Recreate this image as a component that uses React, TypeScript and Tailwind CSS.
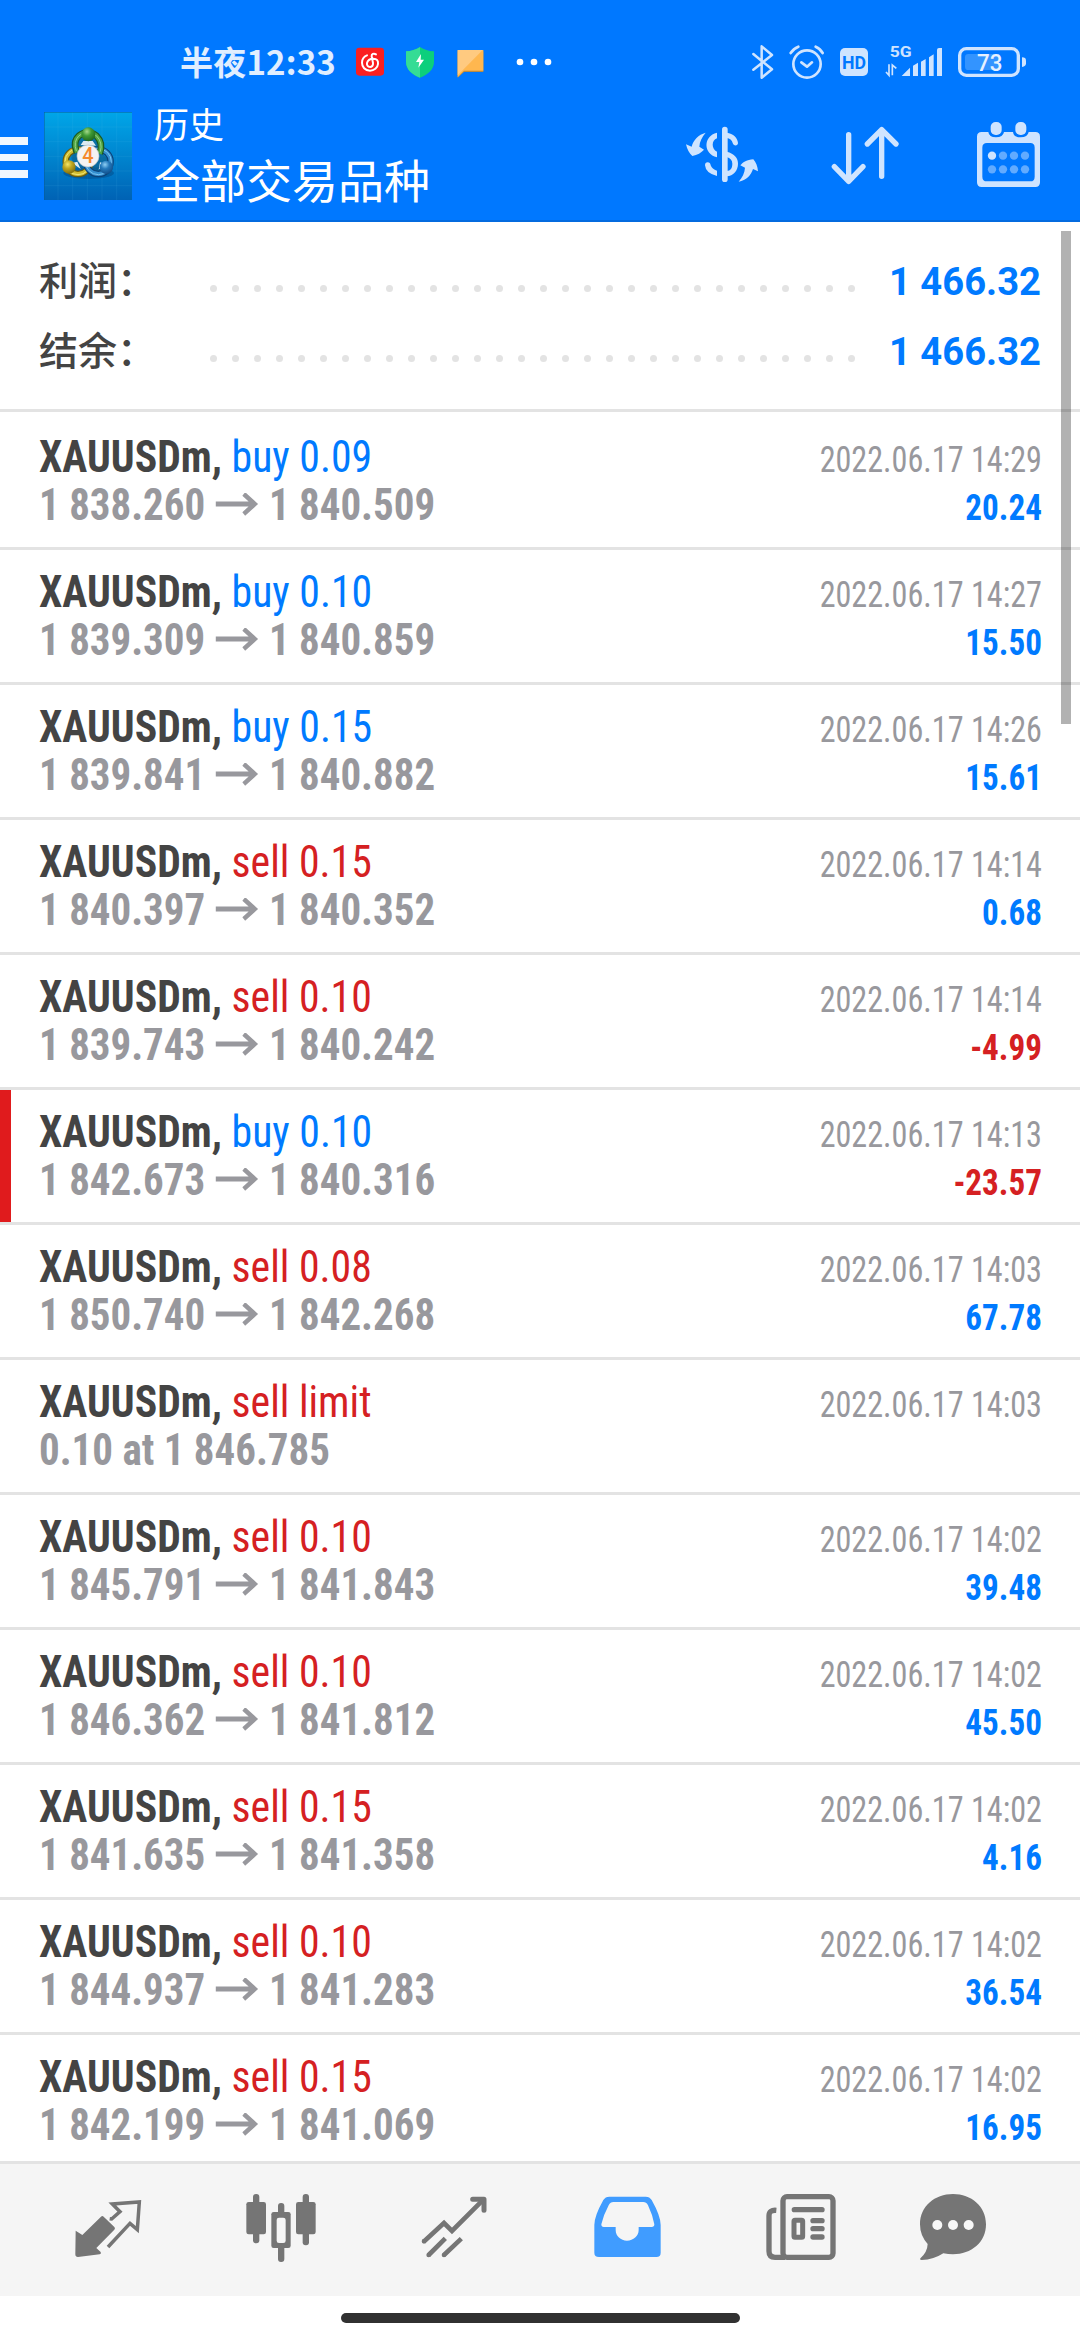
import React from "react";

type Deal = {
  side: "buy" | "sell";
  what: string;
  from: string;
  to?: string;
  time: string;
  profit?: string;
  marked?: boolean;
};

const deals: Deal[] = [
  { side: "buy", what: "buy 0.09", from: "1 838.260", to: "1 840.509", time: "14:29", profit: "20.24" },
  { side: "buy", what: "buy 0.10", from: "1 839.309", to: "1 840.859", time: "14:27", profit: "15.50" },
  { side: "buy", what: "buy 0.15", from: "1 839.841", to: "1 840.882", time: "14:26", profit: "15.61" },
  { side: "sell", what: "sell 0.15", from: "1 840.397", to: "1 840.352", time: "14:14", profit: "0.68" },
  { side: "sell", what: "sell 0.10", from: "1 839.743", to: "1 840.242", time: "14:14", profit: "-4.99" },
  { side: "buy", what: "buy 0.10", from: "1 842.673", to: "1 840.316", time: "14:13", profit: "-23.57", marked: true },
  { side: "sell", what: "sell 0.08", from: "1 850.740", to: "1 842.268", time: "14:03", profit: "67.78" },
  { side: "sell", what: "sell limit", from: "0.10 at 1 846.785", time: "14:03" },
  { side: "sell", what: "sell 0.10", from: "1 845.791", to: "1 841.843", time: "14:02", profit: "39.48" },
  { side: "sell", what: "sell 0.10", from: "1 846.362", to: "1 841.812", time: "14:02", profit: "45.50" },
  { side: "sell", what: "sell 0.15", from: "1 841.635", to: "1 841.358", time: "14:02", profit: "4.16" },
  { side: "sell", what: "sell 0.10", from: "1 844.937", to: "1 841.283", time: "14:02", profit: "36.54" },
  { side: "sell", what: "sell 0.15", from: "1 842.199", to: "1 841.069", time: "14:02", profit: "16.95" },
];

const PALE = "#cfe4ff";

function StatusBar() {
  return (
    <div className="flex h-20 shrink-0 items-end">
      <div className="ml-[180px] w-[176px] whitespace-nowrap font-['Noto_Sans_CJK_SC',sans-serif] text-[33px] font-bold leading-[38px] tracking-[0.2px] text-[#e0eeff]">
        半夜12:33
      </div>
      <svg width="28" height="36" viewBox="588 42 84 108">
        <rect x="588" y="53" width="84" height="84" rx="10" fill="#fb1f20" />
        <g fill="none" stroke="#fff" strokeWidth="6" strokeLinecap="round">
          <path d="M648 73c-7-4-14-1-13 6l4 20c1 8-4 12-9 12-7 0-10-6-9-12 2-9 10-13 19-13 11 0 15 7 14 16-1 12-12 20-24 20-15 0-24-11-24-24 0-11 7-19 15-22" />
        </g>
      </svg>
      <svg className="ml-[22px]" width="28" height="36" viewBox="738 42 84 108">
        <path d="M780 51c12 8 26 12 42 13v32c0 22-18 38-42 47-24-9-42-25-42-47V64c16-1 30-5 42-13z" fill="#0ccf7c" />
        <path d="M780 51c-12 8-26 12-42 13v32c0 22 18 38 42 47z" fill="#35dc95" />
        <path d="M783 72l-15 24h10l-3 17 17-24h-10z" fill="#fff" />
      </svg>
      <svg className="ml-[23px]" width="27" height="36" viewBox="891 42 81 108">
        <path d="M893 64h77v62h-58l-19 17z" fill="#b98a42" />
        <path d="M893 60h77v62h-58l-19 20z" fill="#ffb74f" />
        <path d="M893 60h75l-75 76z" fill="#ffca80" />
      </svg>
      <svg className="ml-8" width="36" height="36" viewBox="1068 42 108 108">
        <g fill="#fff">
          <circle cx="1080" cy="96" r="10" />
          <circle cx="1122" cy="96" r="10" />
          <circle cx="1164" cy="96" r="10" />
        </g>
      </svg>
      <svg className="ml-[200px]" width="22" height="36" viewBox="66 42 66 108">
        <path d="M70 72l56 46-31 25V49l31 26-56 44" fill="none" stroke={PALE} strokeWidth="7.5" strokeLinejoin="round" strokeLinecap="round" />
      </svg>
      <svg className="ml-[15px]" width="36" height="36" viewBox="177 42 108 108">
        <g fill="none" stroke={PALE} strokeWidth="8" strokeLinecap="round" strokeLinejoin="round">
          <circle cx="231" cy="102" r="41" />
          <path d="M214 97l17 13 15-13" />
          <path d="M182 69q8-13 23-19M257 50q14 6 21 19" />
        </g>
      </svg>
      <svg className="ml-[15px]" width="28" height="36" viewBox="330 42 84 108">
        <rect x="330" y="54" width="84" height="84" rx="15" fill={PALE} />
        <text x="372" y="117" textAnchor="middle" fontSize="53" fontWeight="700" fontFamily="Roboto, sans-serif" textLength="72" lengthAdjust="spacingAndGlyphs" fill="#0078ff">HD</text>
      </svg>
      <svg className="ml-[17px]" width="58" height="36" viewBox="465 42 174 108">
        <text x="479" y="80" fontSize="45" fontWeight="700" fontFamily="Roboto, sans-serif" textLength="66" lengthAdjust="spacingAndGlyphs" fill={PALE}>5G</text>
        <path d="M515 138l25-25v25zM549 107l15-9v40h-15zM573 95l14-8v51h-14zM597 82l14-9v65h-14zM621 60q0-6 6-6h9v84h-15z" fill={PALE} />
        <path d="M477 103v33l-9-10M487 136v-31l12 10" fill="none" stroke={PALE} strokeWidth="5" />
      </svg>
      <svg className="ml-[15px]" width="69" height="36" viewBox="684 42 207 108">
        <rect x="689" y="56" width="176" height="80" rx="20" fill="none" stroke={PALE} strokeWidth="10" />
        <path d="M876 82q12 0 12 10v8q0 10-12 11z" fill={PALE} />
        <path d="M715 72h93v48h-93q-10 0-10-10V82q0-10 10-10z" fill="#3394ff" />
        <text x="779" y="122" textAnchor="middle" fontSize="69" fontWeight="500" fontFamily="Roboto, sans-serif" textLength="76" lengthAdjust="spacingAndGlyphs" fill="#e6f1ff">73</text>
      </svg>
    </div>
  );
}

function Logo() {
  return (
    <svg className="ml-4 mt-8" width="88" height="88" viewBox="132 51 264 264">
      <defs>
        <linearGradient id="sky" x1="0" y1="0" x2="0" y2="1">
          <stop offset="0" stopColor="#00a6e8" />
          <stop offset="0.5" stopColor="#0085cf" />
          <stop offset="1" stopColor="#0062b4" />
        </linearGradient>
        <radialGradient id="green" cx="0.4" cy="0.3" r="0.8">
          <stop offset="0" stopColor="#a5d98a" />
          <stop offset="0.4" stopColor="#3f9a35" />
          <stop offset="1" stopColor="#175c1b" />
        </radialGradient>
        <radialGradient id="gold" cx="0.4" cy="0.3" r="0.8">
          <stop offset="0" stopColor="#f4e66a" />
          <stop offset="0.4" stopColor="#bfa51f" />
          <stop offset="1" stopColor="#75640c" />
        </radialGradient>
        <radialGradient id="azure" cx="0.4" cy="0.3" r="0.8">
          <stop offset="0" stopColor="#8fd0f5" />
          <stop offset="0.4" stopColor="#2479bb" />
          <stop offset="1" stopColor="#0c4580" />
        </radialGradient>
      </defs>
      <rect x="132" y="51" width="264" height="264" fill="url(#sky)" />
      <path d="M174 51v264M218 51v264M262 51v264M306 51v264M350 51v264M132 96h264M132 140h264M132 184h264M132 228h264M132 272h264" stroke="#5cc4ee" strokeOpacity="0.16" strokeWidth="2" />
      <path d="M132 52h264M133 51v264" stroke="#0b5c94" strokeOpacity="0.6" strokeWidth="3" />
      <ellipse cx="266" cy="234" rx="76" ry="18" fill="#003f78" opacity="0.4" />
      <path d="M245 222q-38-12-29-52 3-28 22-50l27-20 30 22q20 28 14 56l26 24q10 30-24 42-30 6-46-10-14 18-44 10" fill="#0e5b86" opacity="0.6" />
      <g fill="none">
        <circle cx="234" cy="200" r="37" stroke="#6b5d10" strokeWidth="19" />
        <circle cx="234" cy="200" r="37" stroke="#d0bc30" strokeWidth="12" />
        <circle cx="234" cy="200" r="39" stroke="#f1e57a" strokeWidth="3" />
        <circle cx="295" cy="200" r="37" stroke="#0c437a" strokeWidth="19" />
        <circle cx="295" cy="200" r="37" stroke="#348fd0" strokeWidth="12" />
        <circle cx="295" cy="200" r="39" stroke="#7cc4f0" strokeWidth="3" />
        <path d="M231 172q-14-32 6-50 26-20 52 0 22 22 10 54" stroke="#1b5a20" strokeWidth="20" />
        <path d="M231 172q-14-32 6-50 26-20 52 0 22 22 10 54" stroke="#4fa443" strokeWidth="13" />
        <path d="M229 168q-10-28 8-46 26-20 52 0 20 20 12 48" stroke="#97d48a" strokeWidth="3" />
      </g>
      <path d="M242 150l8-12h28l10 14zM216 204l16-4 10 22zM300 202l14 4-18 18z" fill="#dcebf2" />
      <circle cx="265" cy="118" r="21" fill="url(#green)" />
      <circle cx="207" cy="216" r="20" fill="url(#gold)" />
      <circle cx="319" cy="217" r="20" fill="url(#azure)" />
      <circle cx="264" cy="183" r="33" fill="#f3f3f3" stroke="#b9c2c6" strokeWidth="2" />
      <text x="264" y="205" textAnchor="middle" fontSize="64" fontWeight="500" fontFamily="Roboto, sans-serif" textLength="34" lengthAdjust="spacingAndGlyphs" fill="#f58a2c">4</text>
    </svg>
  );
}

function TitleBar() {
  return (
    <div className="flex flex-1 items-start">
      <div className="mt-[57px] flex w-7 flex-col gap-[9px]">
        <div className="h-[7.7px] bg-[#f0f7ff]" />
        <div className="h-[7.7px] bg-[#f0f7ff]" />
        <div className="h-[7.7px] bg-[#f0f7ff]" />
      </div>
      <Logo />
      <div className="ml-[22px] mt-5 w-[530px] whitespace-nowrap font-['Noto_Sans_CJK_SC',sans-serif] text-white">
        <div className="text-[35px] leading-[46px]">历史</div>
        <div className="text-[46px] leading-[64px]">全部交易品种</div>
      </div>
      <svg className="mt-11" width="76" height="60" viewBox="72 72 228 180" fill={PALE}>
        <path d="M137 98c-11 12-18 27-19 42l14 9c-8 9-20 16-35 19-9-7-16-20-19-35l17 7c5-20 20-36 42-42z" />
        <path d="M236 245c11-12 18-27 19-42l-14-7c8-9 20-17 39-18 8 9 13 22 14 36l-15-7c-6 19-20 34-43 38z" />
        <path d="M171 98v17c-17 5-17 33 0 40v17c-42-11-42-64 0-74zM135 196q0-9 8-9t9 9q4 12 19 16v16q-34-8-36-32z" />
        <rect x="186" y="80" width="17" height="166" rx="8.5" />
        <path d="M200 98c20 2 33 16 34 31 0 10-14 10-16 0-2-9-9-14-18-15zM200 155c24 6 34 19 34 36 0 21-14 36-34 38v-16c12-1 17-9 17-22 0-10-6-17-17-20z" />
      </svg>
      <svg className="ml-[70px] mt-[45px]" width="70" height="61" viewBox="510 75 210 183">
        <path d="M566 104v140M523 200l43 44 43-44M665 229V89M622 132l43-43 43 43" fill="none" stroke={PALE} strokeWidth="16" strokeLinecap="round" strokeLinejoin="round" />
      </svg>
      <svg className="ml-[76px] mt-[41px]" width="65" height="67" viewBox="948 63 195 201">
        <path fillRule="evenodd" fill={PALE} d="M965 96h20q2 16 23 16t24-16h27q2 16 23 16t24-16h20q14 0 14 14v137q0 14-14 14H965q-14 0-14-14V110q0-14 14-14zM981 129q-14 0-14 14v87q0 14 14 14h130q13 0 13-14v-87q0-14-13-14z" />
        <rect x="989" y="63" width="39" height="45" rx="18" fill="#0078ff" />
        <rect x="1063" y="63" width="39" height="45" rx="18" fill="#0078ff" />
        <rect x="992" y="66" width="33" height="39" rx="15" fill={PALE} />
        <rect x="1066" y="66" width="33" height="39" rx="15" fill={PALE} />
        <circle cx="996" cy="167" r="12.5" fill={PALE} />
        <g fill="#62abff">
          <circle cx="1029" cy="167" r="12.5" />
          <circle cx="1062" cy="167" r="12.5" />
          <circle cx="1095" cy="167" r="12.5" />
          <circle cx="996" cy="208" r="12.5" />
          <circle cx="1029" cy="208" r="12.5" />
          <circle cx="1062" cy="208" r="12.5" />
          <circle cx="1095" cy="208" r="12.5" />
        </g>
      </svg>
    </div>
  );
}

function Summary({ label, value }: { label: string; value: string }) {
  return (
    <div className="flex h-[70px] items-start pl-[39px] pr-[39px]">
      <div className="w-[171px] whitespace-nowrap font-['Noto_Sans_CJK_SC',sans-serif] text-[39px] font-medium leading-[64px] text-[#444]">{label}</div>
      <div className="flex gap-[15px] pt-[39px]">
        {Array.from({ length: 30 }, (_, i) => (
          <div key={i} className="size-[7px] rounded-full bg-[#e3e3e3]" />
        ))}
      </div>
      <div className="flex-1 origin-right scale-x-[0.967] whitespace-nowrap text-right font-[Roboto,sans-serif] text-[39.5px] font-bold leading-[71px] text-[#007aff]">{value}</div>
    </div>
  );
}

function Row({ deal, first }: { deal: Deal; first: boolean }) {
  const loss = deal.profit?.startsWith("-");
  return (
    <div className={`flex shrink-0 border-b-[3px] border-[#e3e3e3] font-['Roboto_Condensed',Roboto,sans-serif] [font-stretch:75%] ${first ? "h-[138px] pt-[3px]" : "h-[135px]"}`}>
      <div className={`w-[11px] ${deal.marked ? "bg-[#e01b1d]" : ""}`} />
      <div className="flex flex-1 justify-between whitespace-nowrap pl-7 pr-[38px] pt-[18px]">
        <div className="text-[45px] leading-[48px]">
          <div className="origin-left scale-x-[0.928]">
            <span className="font-bold text-[#444]">XAUUSDm, </span>
            <span className={deal.side === "buy" ? "text-[#007aff]" : "text-[#d52022]"}>{deal.what}</span>
          </div>
          <div className="flex origin-left scale-x-[0.91] items-center font-bold text-[#98989d]">
            <span>{deal.from}</span>
            {deal.to && (
              <>
                <svg className="mx-[11.5px]" width="47" height="24" viewBox="0 0 47 24">
                  <path d="M0 11h43M31 1l12 10-12 10" fill="none" stroke="#98989d" strokeWidth="4.8" />
                </svg>
                <span>{deal.to}</span>
              </>
            )}
          </div>
        </div>
        <div className="pt-[3px] text-right text-[36px] leading-[48px]">
          <div className="origin-right scale-x-[0.893] text-[#98989d]">2022.06.17 {deal.time}</div>
          <div className={`origin-right scale-x-[0.92] font-bold ${loss ? "text-[#d52022]" : "text-[#007aff]"}`}>{deal.profit}</div>
        </div>
      </div>
    </div>
  );
}

function BottomNav() {
  return (
    <div className="flex h-[135px] shrink-0 border-t-[3px] border-[#e3e3e3] bg-[#f5f5f5] pt-[29px]">
      <svg className="ml-[75px]" width="67" height="69" viewBox="105 159 201 207">
        <path d="M107 272l20 13 56-55q4-4 8 0l32 31q4 4 0 8l-54 55 13 12q3 5-3 7l-65 8q-8 0-8-8z" fill="#757575" />
        <path d="M209 236l6 1 25-22-23-23 81-6-6 83-22-19-66 71" fill="none" stroke="#757575" strokeWidth="10.5" />
      </svg>
      <svg className="ml-[104px]" width="70" height="69" viewBox="618 159 210 207" fill="#757575">
        <rect x="639" y="162" width="19" height="148" rx="9" />
        <rect x="619" y="186" width="59" height="97" rx="7" />
        <rect x="788" y="162" width="19" height="154" rx="9" />
        <rect x="768" y="186" width="59" height="97" rx="7" />
        <rect x="714" y="189" width="19" height="177" rx="9" />
        <rect x="694" y="216" width="58" height="108" rx="7" />
        <rect x="710" y="233" width="27" height="76" rx="7" fill="#f5f5f5" />
      </svg>
      <svg className="ml-[105px]" width="66" height="69" viewBox="1143 159 198 207">
        <g fill="none" stroke="#757575" strokeWidth="14">
          <path d="M1151 305l61-56 24 24 94-94" strokeLinejoin="miter" />
          <path d="M1298 178h34v33" strokeWidth="15" strokeLinecap="round" strokeLinejoin="round" />
          <path d="M1166 345l50-50M1212 345l52-49" />
          <path d="M1152 304h0M1166 345h0M1212 345h0" strokeLinecap="round" />
        </g>
      </svg>
      <svg className="ml-[107px]" width="67" height="69" viewBox="102 159 201 207">
        <path fillRule="evenodd" fill="#409cff" d="M148 170h109q12 0 18 10 27 48 27 75v83q0 13-13 13H117q-14 0-14-13v-83q0-27 27-75 6-10 18-10zM160 186q-9 0-14 10-15 28-22 57 0 8 7 8h36v9c0 18 15 32 34 32s35-14 35-32v-9h39q8 0 8-8-5-28-19-57-5-10-14-10z" />
      </svg>
      <svg className="ml-[105px]" width="70" height="69" viewBox="618 159 210 207">
        <rect x="669" y="170" width="150" height="182" rx="12" fill="none" stroke="#757575" strokeWidth="16" />
        <path d="M649 211q-22-2-22 16v107q0 18 18 18h30" fill="none" stroke="#757575" strokeWidth="16" />
        <rect x="695" y="201" width="99" height="16" rx="8" fill="#757575" />
        <rect x="702" y="241" width="26" height="51" rx="3" fill="none" stroke="#757575" strokeWidth="15" />
        <rect x="751" y="234" width="43" height="16" rx="8" fill="#757575" />
        <rect x="751" y="258" width="43" height="16" rx="8" fill="#757575" />
        <rect x="751" y="283" width="43" height="16" rx="8" fill="#757575" />
      </svg>
      <svg className="ml-[83px]" width="68" height="69" viewBox="1077 159 204 207">
        <path d="M1179 162c55 0 99 37 99 91s-44 90-99 90q-14 0-29-3-29 19-65 20-8-1-3-6 20-18 21-42-23-25-23-59c0-54 44-91 99-91z" fill="#757575" />
        <g fill="#f8f8f8">
          <circle cx="1132" cy="255" r="15" />
          <circle cx="1179" cy="255" r="15" />
          <circle cx="1226" cy="255" r="15" />
        </g>
      </svg>
    </div>
  );
}

export default function App() {
  return (
    <div className="flex h-[2340px] w-[1080px] flex-col overflow-hidden bg-white">
      <header className="flex h-[222px] shrink-0 flex-col border-b-2 border-[#046bdf] bg-[#0078ff]">
        <StatusBar />
        <TitleBar />
      </header>
      <main className="relative flex h-[1939px] shrink-0 flex-col overflow-hidden">
        <section className="h-[190px] shrink-0 border-b-[3px] border-[#e3e3e3] pt-6">
          <Summary label="利润：" value="1 466.32" />
          <Summary label="结余：" value="1 466.32" />
        </section>
        {deals.map((deal, i) => (
          <Row key={i} deal={deal} first={i === 0} />
        ))}
        <div className="absolute right-[9px] top-[9px] h-[493px] w-[10px] bg-black/30" />
      </main>
      <BottomNav />
      <footer className="flex flex-1 justify-center pt-[17px]">
        <div className="h-[10px] w-[399px] rounded-full bg-[#313131]" />
      </footer>
    </div>
  );
}
